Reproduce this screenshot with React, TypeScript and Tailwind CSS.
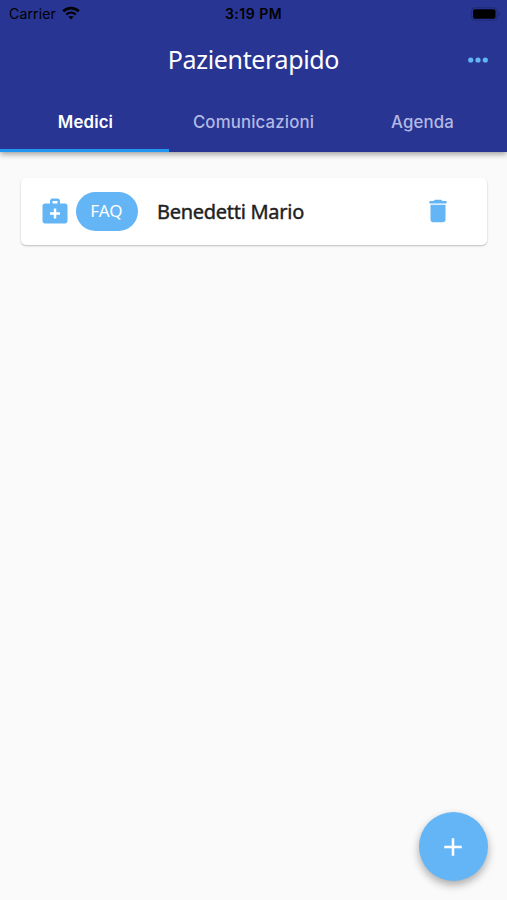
import React, { useState } from 'react';

const tabs = ['Medici', 'Comunicazioni', 'Agenda'];

const StatusBar: React.FC = () => (
  <div className="grid h-7 grid-cols-3 items-center font-['Inter',sans-serif] text-black">
    <div className="flex items-center gap-[6px] pl-[9px]">
      <span className="text-[14px] leading-7 tracking-[0.15px]">Carrier</span>
      <svg className="mb-[2px] h-[14px] w-[18px]" viewBox="0 0 18 14" fill="none">
        <path d="M1.2 5.3C5.7 1 12.3 1 16.8 5.3" stroke="currentColor" strokeWidth="2.6" />
        <path d="M4.3 8.5C7 6 11 6 13.7 8.5" stroke="currentColor" strokeWidth="2.3" />
        <path d="M6.5 10.8C8 9.6 10 9.6 11.5 10.8L9 13.4Z" fill="currentColor" />
      </svg>
    </div>
    <span className="text-center text-[14px] font-semibold leading-7 tracking-[0.5px]">3:19 PM</span>
    <div className="flex justify-end pb-px pr-[6px]">
      <svg className="h-[14px] w-[31px]" viewBox="0 0 31 14">
        <rect x="1.5" y=".7" width="25.5" height="12.6" rx="3.5" stroke="#000" strokeOpacity=".2" fill="none" />
        <rect x="3" y="2.2" width="22.5" height="9.6" rx="2" fill="#000" />
        <path d="M28.5 4.8c1.6.5 1.6 3.9 0 4.4Z" fill="#000" fillOpacity=".3" />
      </svg>
    </div>
  </div>
);

interface DoctorCardProps {
  name: string;
}

const DoctorCard: React.FC<DoctorCardProps> = ({ name }) => (
  <div className="flex h-[67px] items-center rounded-[5px] bg-white pl-[18.5px] pr-[34px] shadow-[0_1px_2px_rgba(0,0,0,0.25)]">
    <svg className="mb-px size-[30px] text-[#64b5f6]" viewBox="0 0 24 24" fill="currentColor">
      <path d="M20 6h-4V4c0-1.1-.9-2-2-2h-4c-1.1 0-2 .9-2 2v2H4c-1.1 0-2 .9-2 2v12c0 1.1.9 2 2 2h16c1.1 0 2-.9 2-2V8c0-1.1-.9-2-2-2zM10 4h4v2h-4V4zm6 11h-3v3h-2v-3H8v-2h3v-3h2v3h3v2z" />
    </svg>
    <button className="mb-px ml-[6px] flex h-[39px] w-[62px] items-center justify-center rounded-full bg-[#64b5f6] font-['Noto_Sans',sans-serif] text-[17px] text-white">
      FAQ
    </button>
    <span className="ml-[19.5px] flex-1 font-['Noto_Sans',sans-serif] text-[20px] tracking-[-0.28px] text-[#212121] [-webkit-text-stroke:0.4px_#212121]">
      {name}
    </span>
    <button aria-label="Elimina" className="mb-[2px]">
      <svg className="size-[30px] text-[#64b5f6]" viewBox="0 0 24 24" fill="currentColor">
        <path d="M6 19c0 1.1.9 2 2 2h8c1.1 0 2-.9 2-2V7H6v12zM18 4h-2.5l-.71-.71c-.18-.18-.44-.29-.7-.29H9.91c-.26 0-.52.11-.7.29L8.5 4H6c-.55 0-1 .45-1 1s.45 1 1 1h12c.55 0 1-.45 1-1s-.45-1-1-1z" />
      </svg>
    </button>
  </div>
);

const App: React.FC = () => {
  const [active, setActive] = useState(0);

  return (
    <div className="flex h-[900px] w-[507px] flex-col bg-[#fafafa]">
      <header className="flex h-[152px] flex-col bg-[#283593] shadow-[0_2px_6px_rgba(0,0,0,0.4)]">
        <StatusBar />
        <div className="grid h-16 grid-cols-[1fr_auto_1fr] items-center">
          <h1 className="col-start-2 font-['Noto_Sans',sans-serif] text-[25px] tracking-[-0.35px] text-white">
            Pazienterapido
          </h1>
          <button aria-label="Menu" className="justify-self-end pr-[19px]">
            <svg className="h-[6px] w-5 text-[#64b5f6]" viewBox="0 0 20 6" fill="currentColor">
              <circle cx="2.7" cy="3" r="2.6" />
              <circle cx="10" cy="3" r="2.6" />
              <circle cx="17.3" cy="3" r="2.6" />
            </svg>
          </button>
        </div>
        <nav className="grid flex-1 grid-cols-3 font-['Inter',sans-serif] text-[16.8px] font-medium tracking-[0.15px]">
          {tabs.map((tab, i) => (
            <button
              key={tab}
              onClick={() => setActive(i)}
              className={
                i === active
                  ? 'border-b-[3px] border-[#2196f3] pl-[2px] pt-[5px] font-semibold text-white'
                  : 'border-b-[3px] border-transparent pt-[5px] text-[#b3b9e2]'
              }
            >
              {tab}
            </button>
          ))}
        </nav>
      </header>

      <main className="flex-1 pl-[21px] pr-5 pt-[26px]">
        <DoctorCard name="Benedetti Mario" />
      </main>

      <footer className="flex justify-end pb-[19px] pr-[19.5px]">
        <button
          aria-label="Aggiungi"
          className="flex size-[69px] items-center justify-center rounded-full bg-[#64b5f6] pr-px text-white shadow-[0_4px_8px_rgba(0,0,0,0.32)]"
        >
          <svg className="size-[30px]" viewBox="0 0 24 24" fill="currentColor">
            <path d="M19 13h-6v6h-2v-6H5v-2h6V5h2v6h6v2z" />
          </svg>
        </button>
      </footer>
    </div>
  );
};

export default App;
